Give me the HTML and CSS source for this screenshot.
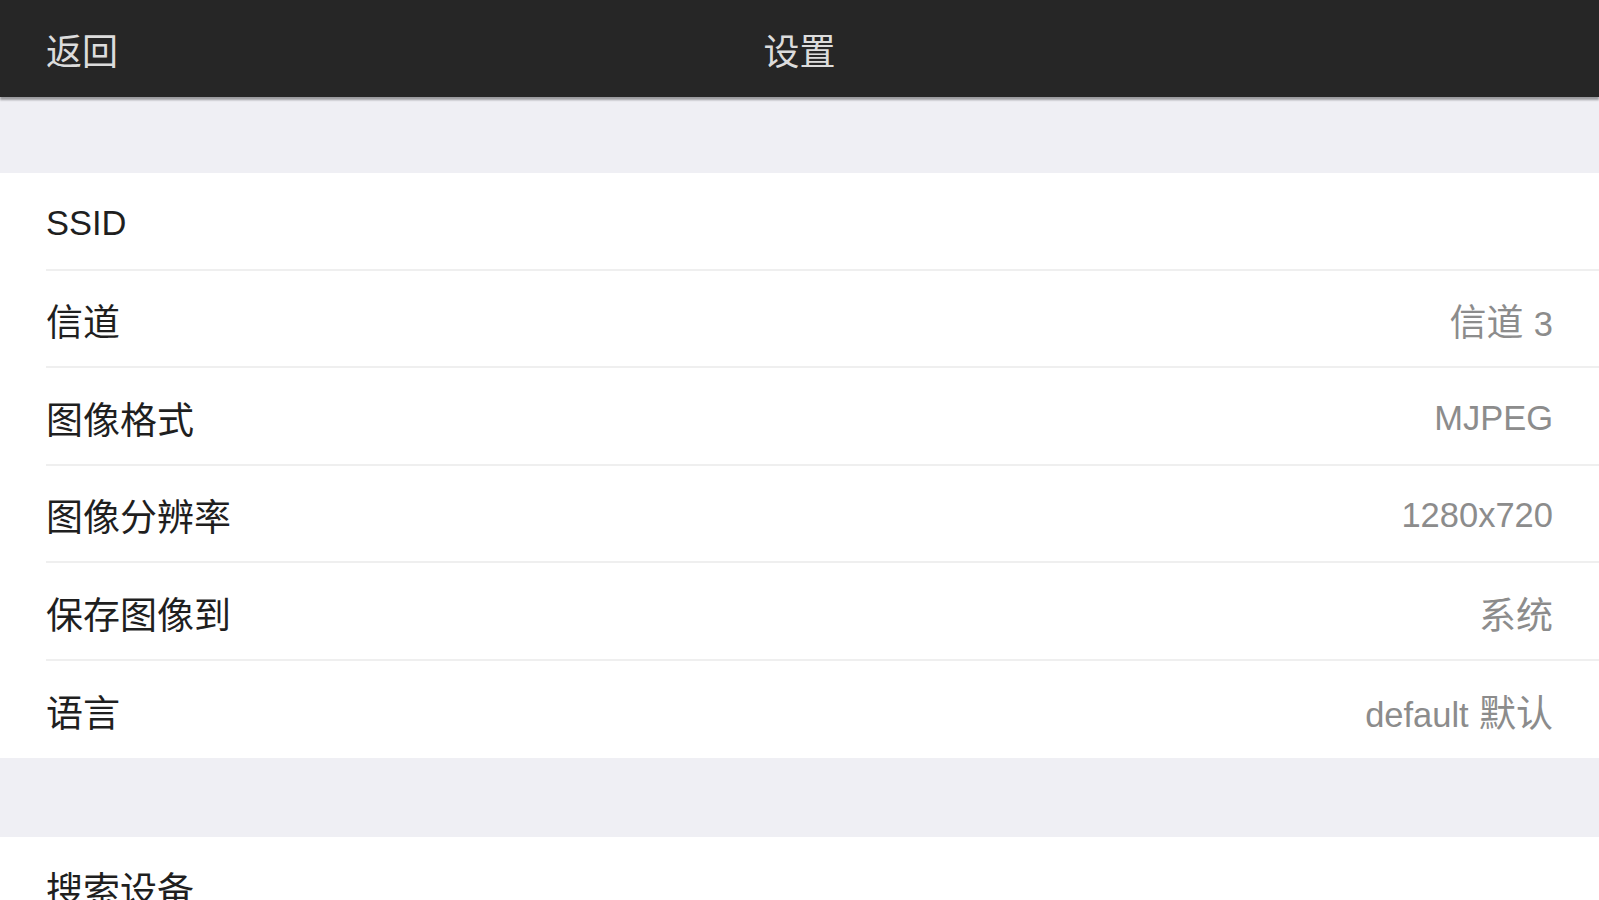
FILE: index.html
```html
<!DOCTYPE html>
<html lang="zh-CN">
<head>
<meta charset="utf-8">
<title>设置</title>
<link rel="stylesheet" href="styles.css">
</head>
<body>
<header class="navbar">
  <div class="nav-left">返回</div>
  <div class="nav-title">设置</div>
  <div class="nav-right"></div>
</header>
<div class="gap gap-top"></div>
<section class="group">
  <div class="row"><span class="label"><span class="lat">SSID</span></span><span class="value"></span></div>
  <div class="row"><span class="label">信道</span><span class="value">信道 <span class="lat">3</span></span></div>
  <div class="row"><span class="label">图像格式</span><span class="value"><span class="lat">MJPEG</span></span></div>
  <div class="row"><span class="label">图像分辨率</span><span class="value"><span class="lat">1280x720</span></span></div>
  <div class="row"><span class="label">保存图像到</span><span class="value">系统</span></div>
  <div class="row"><span class="label">语言</span><span class="value"><span class="lat">default</span> 默认</span></div>
</section>
<div class="gap gap-mid"></div>
<section class="group">
  <div class="row"><span class="label">搜索设备</span><span class="value"></span></div>
</section>
</body>
</html>
```
FILE: styles.css
```css
html, body {
  margin: 0;
  padding: 0;
  background: #efeff4;
  font-family: "Liberation Sans", "Noto Sans CJK SC", sans-serif;
  overflow: hidden;
}

.navbar {
  height: 97px;
  background: #262626;
  display: flex;
  align-items: center;
  justify-content: space-between;
  padding: 0 46px;
  box-sizing: border-box;
  color: #dcdcdc;
  font-size: 36px;
  box-shadow: 0 3px 2px rgba(0,0,0,0.35);
  position: relative;
  z-index: 1;
}

.nav-left, .nav-right {
  width: 200px;
}

.nav-title {
  flex: 1;
  text-align: center;
}

.gap-top {
  height: 76px;
}

.gap-mid {
  height: 79px;
}

.group {
  background: #ffffff;
}

.row {
  height: 97.5px;
  margin-left: 46px;
  padding-right: 46px;
  padding-top: 4px;
  display: flex;
  align-items: center;
  justify-content: space-between;
  box-sizing: border-box;
  border-bottom: 2px solid #efefef;
  font-size: 37px;
}

.row:last-child {
  border-bottom: none;
}

.lat {
  font-size: 34.5px;
}

.label {
  color: #1f1f1f;
}

.value {
  color: #8c8c8c;
}
```
